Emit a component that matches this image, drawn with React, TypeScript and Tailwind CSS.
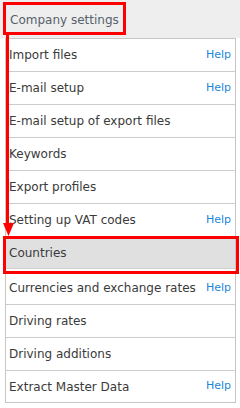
import React from 'react'

type Item = { label: string; help?: boolean; active?: boolean }

// Settings menu entries, in display order
const items: Item[] = [
  { label: 'Import files', help: true },
  { label: 'E-mail setup', help: true },
  { label: 'E-mail setup of export files' },
  { label: 'Keywords' },
  { label: 'Export profiles' },
  { label: 'Setting up VAT codes', help: true },
  { label: 'Countries', active: true },
  { label: 'Currencies and exchange rates', help: true },
  { label: 'Driving rates' },
  { label: 'Driving additions' },
  { label: 'Extract Master Data', help: true },
]

function Row({ item, last }: { item: Item; last: boolean }) {
  const content = (
    <>
      <span className="text-[12px] text-[#3a3a3a] whitespace-nowrap">{item.label}</span>
      {item.help && <span className="text-[11px] text-[#1b87db]">Help</span>}
    </>
  )

  if (item.active) {
    return (
      <div className="h-[35px] border-b border-[#cccccc]">
        <div className="h-[32px] bg-[#e0e0e0] border-b border-[#d0d0d0] flex items-center justify-between pl-[3px] pr-[4px]">
          {content}
        </div>
      </div>
    )
  }

  return (
    <div
      className={
        last
          ? 'h-[31px] flex items-center justify-between pl-[3px] pr-[4px]'
          : 'h-[33px] border-b border-[#cccccc] flex items-center justify-between pl-[3px] pr-[4px]'
      }
    >
      {content}
    </div>
  )
}

export default function App() {
  return (
    <div className="relative w-[240px] h-[408px] overflow-hidden bg-white font-['DejaVu_Sans',sans-serif]">
      {/* Tab bar */}
      <div className="h-[38px] bg-[#eeeeee] flex items-center pt-[2px] pl-[10px]">
        <span className="text-[12px] text-[#56616b]">Company settings</span>
      </div>

      <div className="ml-[5px] w-[231px] border border-[#c6c6c6] bg-white">
        {items.map((it, i) => (
          <Row key={it.label} item={it} last={i === items.length - 1} />
        ))}
      </div>

      {/* Annotations */}
      <div className="absolute left-[3px] top-[2px] w-[123px] h-[33px] border-[3px] border-[#ff0000]" />
      <div className="absolute left-[6px] top-[34px] w-[3px] h-[190px] bg-[#ff0000]" />
      <svg className="absolute left-[3px] top-[223px]" width="11" height="13" viewBox="0 0 11 13">
        <polygon points="0,0 11,0 5.5,13" fill="#ff0000" />
      </svg>
      <div className="absolute left-[3px] top-[236px] w-[236px] h-[38px] border-[3px] border-[#ff0000]" />
    </div>
  )
}
